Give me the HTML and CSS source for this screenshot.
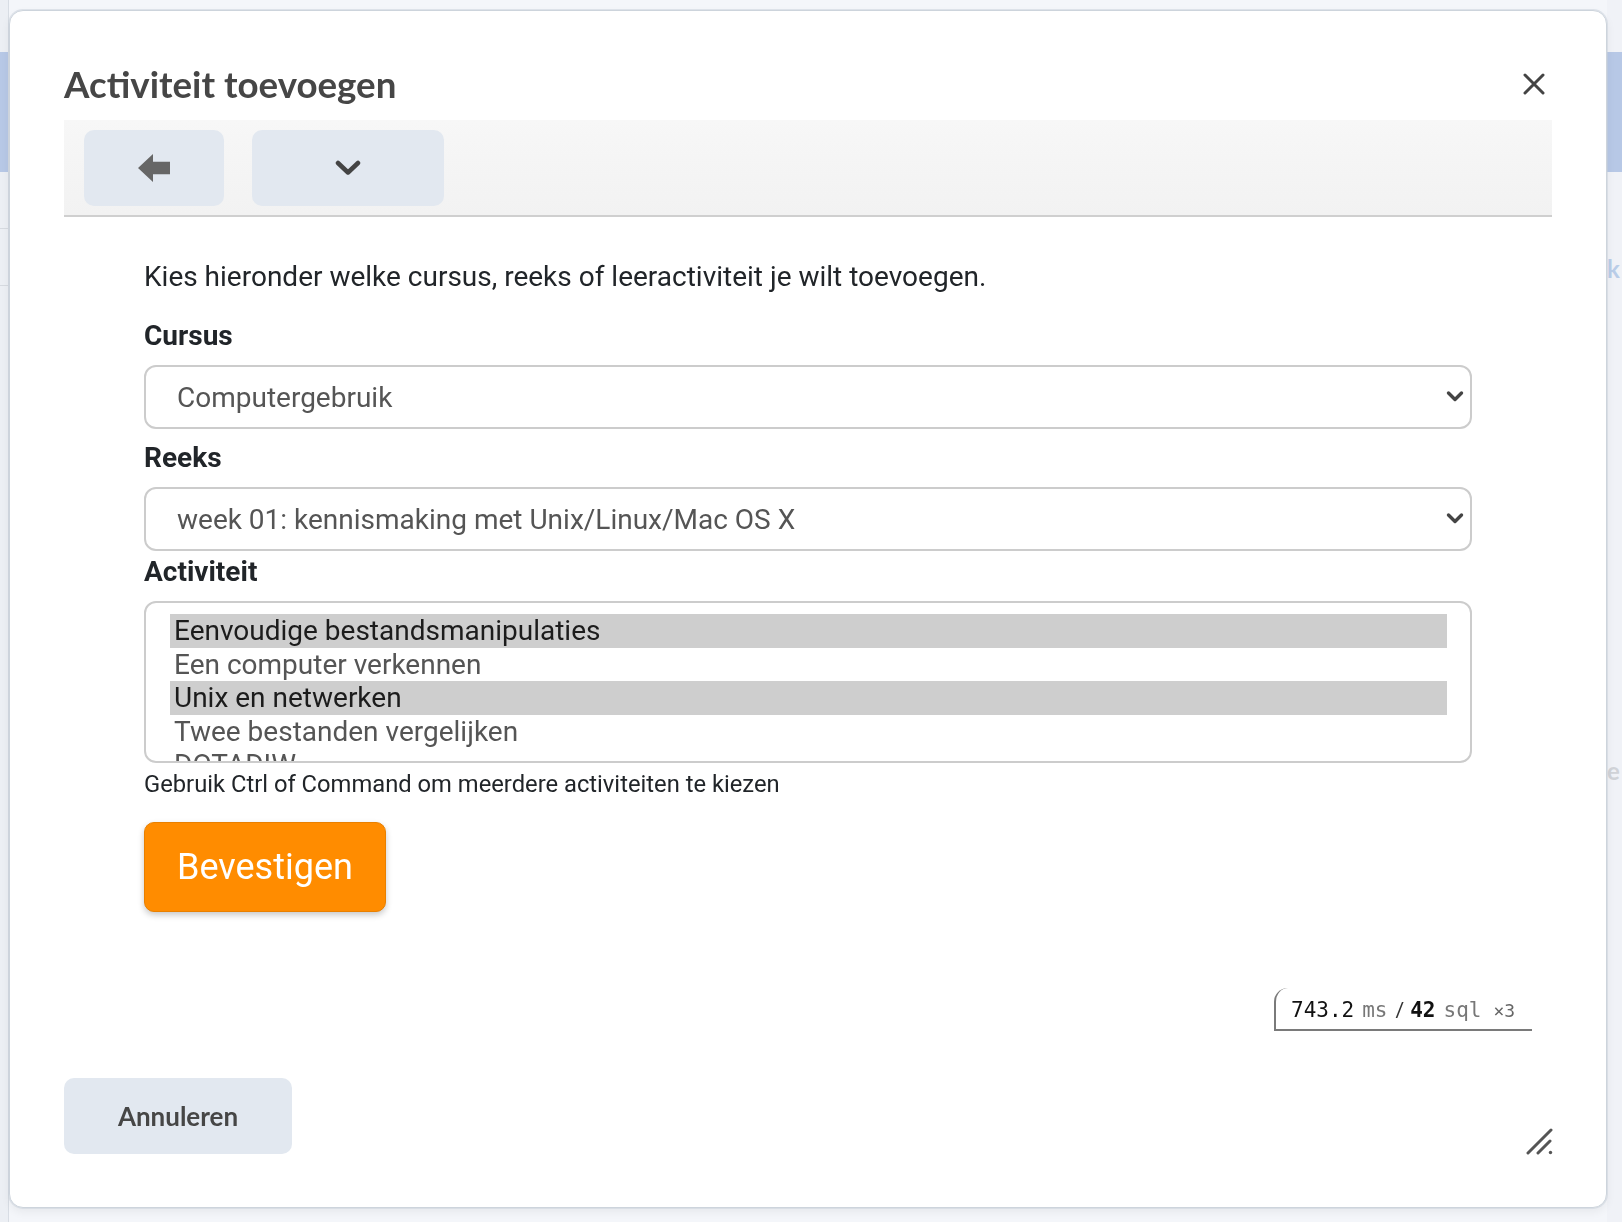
FILE: index.html
```html
<!DOCTYPE html>
<html lang="nl">
<head>
<meta charset="utf-8">
<title>Activiteit toevoegen</title>
<link rel="stylesheet" href="styles.css">
</head>
<body>
<div class="page">
  <div class="side side-left"><div class="side-bar"></div><div class="side-rule"></div><div class="side-rule"></div></div>
  <div class="page-main"></div>
  <div class="side side-right"><div class="side-bar"></div><div class="side-letter">k</div><div class="side-letter side-letter-e">e</div></div>
</div>
<div class="overlay">
  <div class="modal">
    <div class="modal-header">
      <h1 class="modal-title">Activiteit toevoegen</h1>
      <button class="close-btn" aria-label="Sluiten">
        <svg width="22" height="22" viewBox="0 0 22 22"><path d="M2 2L20 20M20 2L2 20" stroke="#444" stroke-width="3" stroke-linecap="round"/></svg>
      </button>
    </div>
    <div class="toolbar">
      <button class="tool-btn tool-back" aria-label="Terug">
        <svg class="back-icon" width="32" height="30" viewBox="0 0 32 30"><path d="M0 15L15 1V8.7H32V21.3H15V29Z" fill="#666"/></svg>
      </button>
      <button class="tool-btn tool-more" aria-label="Meer">
        <svg width="28" height="16" viewBox="0 0 28 16"><path d="M4 3L14 12.5L24 3" fill="none" stroke="#444" stroke-width="4.5" stroke-linecap="round" stroke-linejoin="round"/></svg>
      </button>
    </div>
    <div class="modal-body">
      <p class="intro">Kies hieronder welke cursus, reeks of leeractiviteit je wilt toevoegen.</p>
      <div class="field-label">Cursus</div>
      <div class="select">
        <span class="select-value">Computergebruik</span>
        <svg class="select-caret" width="18" height="13" viewBox="0 0 18 13"><path d="M2.5 3L9 9.5L15.5 3" fill="none" stroke="#444" stroke-width="3.4" stroke-linecap="round" stroke-linejoin="round"/></svg>
      </div>
      <div class="field-label">Reeks</div>
      <div class="select">
        <span class="select-value">week 01: kennismaking met Unix/Linux/Mac OS X</span>
        <svg class="select-caret" width="18" height="13" viewBox="0 0 18 13"><path d="M2.5 3L9 9.5L15.5 3" fill="none" stroke="#444" stroke-width="3.4" stroke-linecap="round" stroke-linejoin="round"/></svg>
      </div>
      <div class="field-label field-label-tight">Activiteit</div>
      <div class="listbox">
        <div class="option option-selected">Eenvoudige bestandsmanipulaties</div>
        <div class="option">Een computer verkennen</div>
        <div class="option option-selected">Unix en netwerken</div>
        <div class="option">Twee bestanden vergelijken</div>
        <div class="option">DOTADIW</div>
      </div>
      <div class="hint">Gebruik Ctrl of Command om meerdere activiteiten te kiezen</div>
      <button class="confirm-btn">Bevestigen</button>
      <div class="profiler">
        <span class="prof-num">743.2</span><span class="prof-unit">ms</span><span class="prof-sep">/</span><span class="prof-num prof-bold">42</span><span class="prof-unit">sql</span><span class="prof-mult">×3</span>
      </div>
    </div>
    <div class="modal-footer">
      <button class="cancel-btn">Annuleren</button>
      <svg class="resize-icon" width="28" height="28" viewBox="0 0 28 28"><path d="M2 26L25 3M12 26L24 14" stroke="#555" stroke-width="3" stroke-linecap="round"/><circle cx="24.5" cy="25.5" r="1.7" fill="#555"/></svg>
    </div>
  </div>
</div>
</body>
</html>
```

FILE: styles.css
```css
* { box-sizing: border-box; }

html, body {
  margin: 0;
  padding: 0;
  width: 1622px;
  height: 1222px;
  overflow: hidden;
}

body {
  background: #f4f6fa;
  font-family: Roboto, "Liberation Sans", sans-serif;
  color: #212529;
}

.page {
  display: flex;
  height: 1222px;
}

.side {
  width: 20px;
  background: #eceff4;
  padding-top: 52px;
  display: flex;
  flex-direction: column;
}

.side-left {
  width: 9px;
  border-right: 1px solid #d8dde4;
}

.side-right {
  width: 15px;
  margin-left: auto;
  background: #f0f2f7;
}

.side-bar {
  height: 120px;
  background: #b7c8e6;
}

.side-rule {
  height: 1px;
  background: #d6dae0;
  margin-top: 56px;
}

.side-letter {
  margin-top: 82px;
  font-family: Lato, sans-serif;
  font-weight: 700;
  font-size: 24px;
  line-height: 30px;
  color: #b9cde8;
}

.side-letter-e {
  margin-top: 472px;
  color: #d0d3d8;
}

.page-main { flex: 1; }

.overlay {
  position: fixed;
  inset: 0;
  padding: 10px 15px 14px 9px;
}

.modal {
  width: 1598px;
  height: 1198px;
  background: #fff;
  border: 1px solid #cdd4dc;
  border-radius: 14px;
  box-shadow: 0 0 0 1px rgba(200, 208, 218, 0.5), 0 4px 10px rgba(0, 0, 0, 0.06);
  display: flex;
  flex-direction: column;
  padding: 0 54px;
}

.modal-header {
  display: flex;
  align-items: center;
  justify-content: space-between;
  padding-top: 51px;
}

.modal-title {
  margin: 0;
  font-family: Lato, "Liberation Sans", sans-serif;
  font-weight: 700;
  font-size: 36.7px;
  line-height: 44px;
  color: #464646;
}

.close-btn {
  border: 0;
  background: none;
  padding: 0;
  margin-right: 7px;
  width: 22px;
  height: 22px;
  display: flex;
}

.toolbar {
  margin-top: 14px;
  background: linear-gradient(#f7f7f7, #f2f2f2);
  border-bottom: 2px solid #cfcfcf;
  padding: 10px 20px 9px;
  display: flex;
  gap: 28px;
}

.tool-btn {
  border: 0;
  height: 76px;
  border-radius: 10px;
  background: #e2e8f0;
  display: flex;
  align-items: center;
  justify-content: center;
  padding: 0;
}

.tool-back { width: 140px; }
.tool-more { width: 192px; }

.back-icon { filter: blur(0.5px); }

.modal-body {
  flex: 1;
  padding: 0 80px;
  display: flex;
  flex-direction: column;
  align-items: flex-start;
}

.intro {
  margin: 40px 0 20px;
  font-size: 28px;
  line-height: 39px;
  color: #212529;
}

.field-label {
  font-size: 28px;
  font-weight: 700;
  line-height: 39px;
  margin-bottom: 10px;
  color: #212529;
}

.field-label-tight { margin-top: -8px; }

.select {
  align-self: stretch;
  height: 64px;
  border: 2px solid #cccccc;
  border-radius: 12px;
  display: flex;
  align-items: center;
  justify-content: space-between;
  padding: 0 6px 0 31px;
  margin-bottom: 9px;
  font-size: 28px;
  color: #555;
}

.select-caret { margin-top: -1px; }

.listbox {
  align-self: stretch;
  height: 162px;
  border: 2px solid #cccccc;
  border-radius: 12px;
  padding: 11px 23px 0 24px;
  overflow: hidden;
}

.option {
  height: 33.5px;
  line-height: 33px;
  padding-left: 4px;
  font-size: 28px;
  color: #555;
  white-space: nowrap;
}

.option-selected {
  background: #cecece;
  color: #1c1c1c;
}

.hint {
  margin-top: 4px;
  font-size: 23.75px;
  line-height: 34px;
  color: #212529;
}

.confirm-btn {
  margin-top: 21px;
  width: 242px;
  height: 90px;
  border: 1px solid #e98000;
  border-radius: 10px;
  background: #ff8c00;
  color: #fff;
  font-family: Roboto, "Liberation Sans", sans-serif;
  font-size: 36px;
  text-align: left;
  padding: 0 0 0 32px;
  box-shadow: 0 3px 6px rgba(0, 0, 0, 0.22);
}

.profiler {
  align-self: flex-end;
  margin: 76px -60px 0 0;
  width: 258px;
  height: 43px;
  border-left: 2px solid #7a7a7a;
  border-bottom: 2px solid #7a7a7a;
  border-top-left-radius: 14px;
  padding: 10px 0 0 15px;
  font-family: "DejaVu Sans Mono", "Liberation Mono", monospace;
  font-size: 21px;
  line-height: 24px;
  white-space: nowrap;
}

.prof-num { color: #111; }
.prof-bold { font-weight: 600; margin-left: 6px; }
.prof-unit { color: #777; margin-left: 8px; }
.prof-sep { color: #333; margin-left: 8px; font-family: Roboto, sans-serif; }
.prof-mult { color: #666; font-size: 18px; margin-left: 12px; }

.modal-footer {
  display: flex;
  align-items: flex-end;
  justify-content: space-between;
  padding-bottom: 53px;
}

.cancel-btn {
  width: 228px;
  height: 76px;
  border: 0;
  border-radius: 10px;
  background: #e2e8f0;
  font-family: Lato, "Liberation Sans", sans-serif;
  font-weight: 700;
  font-size: 26px;
  color: #464646;
  padding: 0;
}

.resize-icon { margin: 0 -2px -1px 0; }
```
